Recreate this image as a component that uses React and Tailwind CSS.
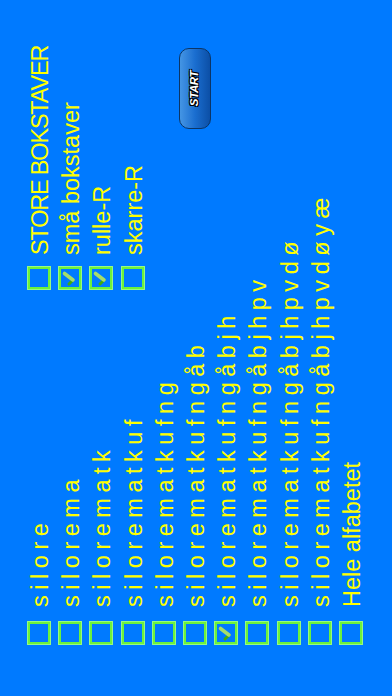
const leftRows = [
  { text: "silore", checked: false },
  { text: "silorema", checked: false },
  { text: "silorematk", checked: false },
  { text: "silorematkuf", checked: false },
  { text: "silorematkufng", checked: false },
  { text: "silorematkufngåb", checked: false },
  { text: "silorematkufngåbjh", checked: true },
  { text: "silorematkufngåbjhpv", checked: false },
  { text: "silorematkufngåbjhpvdø", checked: false },
  { text: "silorematkufngåbjhpvdøyæ", checked: false },
];

const rightRows = [
  { text: "STORE BOKSTAVER", checked: false, tight: true },
  { text: "små bokstaver", checked: true },
  { text: "rulle-R", checked: true },
  { text: "skarre-R", checked: false },
];

function Box({ checked }) {
  return (
    <div className="w-[24px] h-[24px] shrink-0 border-[3px] border-[#6cf23c] outline outline-1 outline-[#a8ffa0]/70 -outline-offset-1">
      {checked && (
        <svg viewBox="0 0 18 18" className="w-full h-full">
          <path d="M3 8 L7 12" stroke="#3faa10" strokeWidth="3" strokeLinecap="round" fill="none" />
          <path d="M7 12 L13.5 3.5" stroke="#a6dd6a" strokeWidth="3.6" strokeLinecap="round" fill="none" />
        </svg>
      )}
    </div>
  );
}

function Row({ checked, children, gap, className }) {
  return (
    <div className={`flex items-center h-[24px] ${gap}`}>
      <Box checked={checked} />
      <span className={`whitespace-nowrap text-[23.5px] leading-[24px] pt-[2px] text-[#ffff00] ${className || ""}`}>
        {children}
      </span>
    </div>
  );
}

export default function App() {
  return (
    <div className="w-[392px] h-[696px] overflow-hidden bg-[#007aff]" style={{ fontFamily: '"Liberation Sans", Arial, sans-serif' }}>
      <div className="w-[696px] h-[392px] origin-top-left translate-y-[696px] -rotate-90 flex pt-[27px] pl-[51px]">
        {/* word lists */}
        <div className="w-[355px] flex flex-col gap-[7.2px]">
          {leftRows.map((r) => (
            <Row key={r.text} checked={r.checked} gap="gap-[14px]" className="[word-spacing:-1px]">
              {r.text.split("").join(" ")}
            </Row>
          ))}
          <Row checked={false} gap="gap-[14px]">Hele alfabetet</Row>
        </div>

        {/* options */}
        <div className="flex flex-col gap-[7.2px]">
          {rightRows.map((r) => (
            <Row key={r.text} checked={r.checked} gap="gap-[11px]" className={r.tight ? "tracking-[-1.2px]" : ""}>
              {r.text}
            </Row>
          ))}
          <button className="mt-[27px] ml-[161px] w-[81px] h-[32px] rounded-[10px] border-[1.5px] border-[#0b3566] bg-linear-to-b from-[#4495e4] via-[#1a6ed0] to-[#0c4fa6] flex items-center justify-center">
            <span className="text-white italic font-black text-[11.5px] tracking-[-0.4px] [text-shadow:0_0_1px_#000,1px_1px_0_#000,-1px_-1px_0_#000,1px_-1px_0_#000,-1px_1px_0_#000]">
              START
            </span>
          </button>
        </div>
      </div>
    </div>
  );
}
